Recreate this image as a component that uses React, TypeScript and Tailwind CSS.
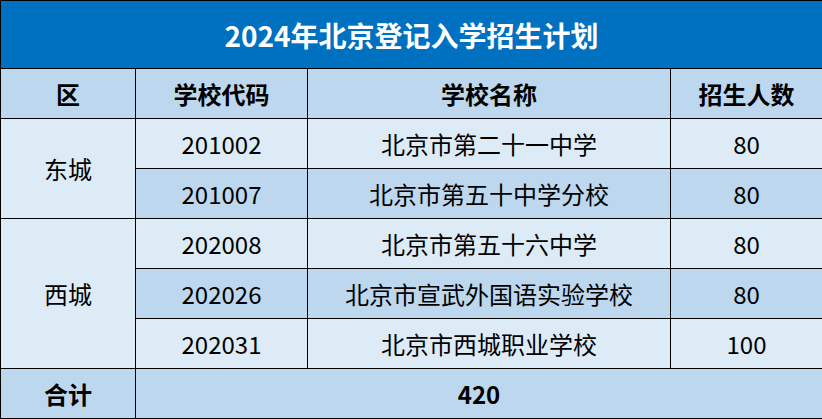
import React from "react";

interface School {
  code: string;
  name: string;
  count: number;
}

interface District {
  name: string;
  schools: School[];
}

const districts: District[] = [
  {
    name: "东城",
    schools: [
      { code: "201002", name: "北京市第二十一中学", count: 80 },
      { code: "201007", name: "北京市第五十中学分校", count: 80 },
    ],
  },
  {
    name: "西城",
    schools: [
      { code: "202008", name: "北京市第五十六中学", count: 80 },
      { code: "202026", name: "北京市宣武外国语实验学校", count: 80 },
      { code: "202031", name: "北京市西城职业学校", count: 100 },
    ],
  },
];

const cell = "border border-black text-center align-middle p-0";

const App = () => {
  const total = districts.reduce(
    (sum, d) => sum + d.schools.reduce((s, x) => s + x.count, 0),
    0
  );
  let rowIndex = 0;

  return (
    <div className="w-[822px] h-[419px] bg-white font-['Noto_Sans_CJK_SC','Microsoft_YaHei',sans-serif] text-[24px] text-black">
      <table className="w-[822px] border-collapse table-fixed">
        <colgroup>
          <col className="w-[135px]" />
          <col className="w-[172px]" />
          <col className="w-[363px]" />
          <col className="w-[152px]" />
        </colgroup>
        <tbody>
          <tr className="h-[68px]">
            <td colSpan={4} className={`${cell} bg-[#0070C0] text-white font-bold text-[28px]`}>
              2024年北京登记入学招生计划
            </td>
          </tr>
          <tr className="h-[50px] bg-[#BDD7EE] font-bold">
            <td className={cell}>区</td>
            <td className={cell}>学校代码</td>
            <td className={cell}>学校名称</td>
            <td className={cell}>招生人数</td>
          </tr>
          {districts.map((d) =>
            d.schools.map((s, i) => {
              const shade = rowIndex++ % 2 === 0 ? "bg-[#DDEBF7]" : "bg-[#BDD7EE]";
              return (
                <tr key={s.code} className="h-[50px]">
                  {i === 0 && (
                    <td rowSpan={d.schools.length} className={`${cell} bg-[#DDEBF7]`}>
                      {d.name}
                    </td>
                  )}
                  <td className={`${cell} ${shade}`}>{s.code}</td>
                  <td className={`${cell} ${shade}`}>{s.name}</td>
                  <td className={`${cell} ${shade}`}>{s.count}</td>
                </tr>
              );
            })
          )}
          <tr className="h-[50px] bg-[#BDD7EE] font-bold">
            <td className={cell}>合计</td>
            <td colSpan={3} className={cell}>{total}</td>
          </tr>
        </tbody>
      </table>
    </div>
  );
};

export default App;
